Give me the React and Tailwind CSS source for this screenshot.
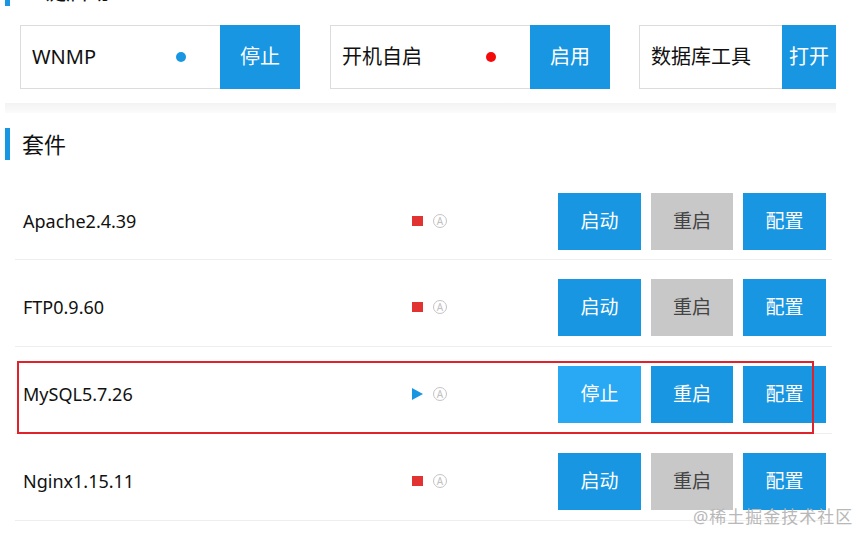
import React from 'react'

const BLUE = 'bg-[#1996e2]'

const QUICK = [
  { name: 'WNMP', dot: 'bg-[#1996e2]', action: '停止', textW: 'w-[200px]', btnW: 'w-[80px]' },
  { name: '开机自启', dot: 'bg-[#f50a0a]', action: '启用', textW: 'w-[200px]', btnW: 'w-[80px]' },
  { name: '数据库工具', dot: null, action: '打开', textW: 'w-[143px]', btnW: 'w-[54px]' },
]

const SUITES = [
  { name: 'Apache2.4.39', running: false },
  { name: 'FTP0.9.60', running: false },
  { name: 'MySQL5.7.26', running: true },
  { name: 'Nginx1.15.11', running: false },
]

function SectionTitle({ children, className = '' }) {
  return (
    <div className={`flex items-center h-[32px] border-l-[5px] border-[#1996e2] pl-[12px] ${className}`}>
      <span className="text-[22px] leading-none text-[#111]">{children}</span>
    </div>
  )
}

function AutoMark() {
  return (
    <span className="ml-[10px] w-[14px] h-[14px] rounded-full border border-[#c4c4c4] flex items-center justify-center text-[10px] leading-none text-[#c0c0c0]">
      A
    </span>
  )
}

function SuiteRow({ name, running, first }) {
  return (
    <div
      className={`flex items-center pt-[19px] pl-[8px] pr-[6px] border-b border-[#eeeeee] ${first ? 'h-[86px] pb-[10px]' : 'h-[87px] pb-[11px]'}`}
    >
      <span className="w-[389px] text-[18px] text-[#111]">{name}</span>
      <div className="flex items-center">
        {running ? (
          <svg width="11" height="12" viewBox="0 0 11 12">
            <polygon points="0,0 11,6 0,12" fill="#1996e2" />
          </svg>
        ) : (
          <span className="w-[11px] h-[10px] bg-[#e23333]" />
        )}
        <AutoMark />
      </div>
      <div className="ml-auto flex gap-[10px] text-[19px]">
        <button className={`w-[83px] h-[57px] text-white ${running ? 'bg-[#29a8f3]' : BLUE}`}>
          {running ? '停止' : '启动'}
        </button>
        <button
          className={`w-[82px] h-[57px] ${running ? 'bg-[#1996e2] text-white' : 'bg-[#c8c8c8] text-[#444]'}`}
        >
          重启
        </button>
        <button className={`w-[83px] h-[57px] text-white ${BLUE}`}>配置</button>
      </div>
    </div>
  )
}

export default function App() {
  return (
    <div
      className="relative w-[859px] h-[534px] overflow-hidden bg-white"
      style={{ fontFamily: '"Noto Sans", "Noto Sans CJK SC", sans-serif' }}
    >
      <div className="-mt-[26px] pl-[5px] w-[836px]">
        <SectionTitle>一键启动</SectionTitle>

        {/* quick actions */}
        <div className="mt-[19px] ml-[15px] flex gap-[30px]">
          {QUICK.map((q, i) => (
            <div key={q.name} className={`flex h-[64px] ${i === 2 ? '-ml-[1px]' : ''}`}>
              <div
                className={`${q.textW} flex items-center justify-between whitespace-nowrap border border-r-0 border-[#dcdcdc] pl-[11px] ${q.dot ? 'pr-[34px]' : 'pr-[2px]'}`}
              >
                <span className="text-[20px] text-[#111]">{q.name}</span>
                {q.dot && <span className={`w-[10px] h-[10px] rounded-full ${q.dot}`} />}
              </div>
              <button className={`${q.btnW} h-[64px] ${BLUE} text-white text-[20px] whitespace-nowrap`}>
                {q.action}
              </button>
            </div>
          ))}
        </div>

        <div className="mt-[14px] h-[10px] bg-gradient-to-b from-[#f3f3f3] to-[#fbfbfb]" />

        <SectionTitle className="mt-[15px]">套件</SectionTitle>

        <div className="mt-[14px] ml-[10px] w-[817px]">
          {SUITES.map((s, i) => (
            <SuiteRow key={s.name} {...s} first={i === 0} />
          ))}
        </div>
      </div>

      {/* annotation box */}
      <div className="absolute left-[17px] top-[361px] w-[797px] h-[73px] border-2 border-[#e0232b]" />

      {/* watermark */}
      <span className="absolute left-[693px] top-[504px] text-[17px] text-[#b8b8b8] tracking-[1px]">
        @稀土掘金技术社区
      </span>
    </div>
  )
}
